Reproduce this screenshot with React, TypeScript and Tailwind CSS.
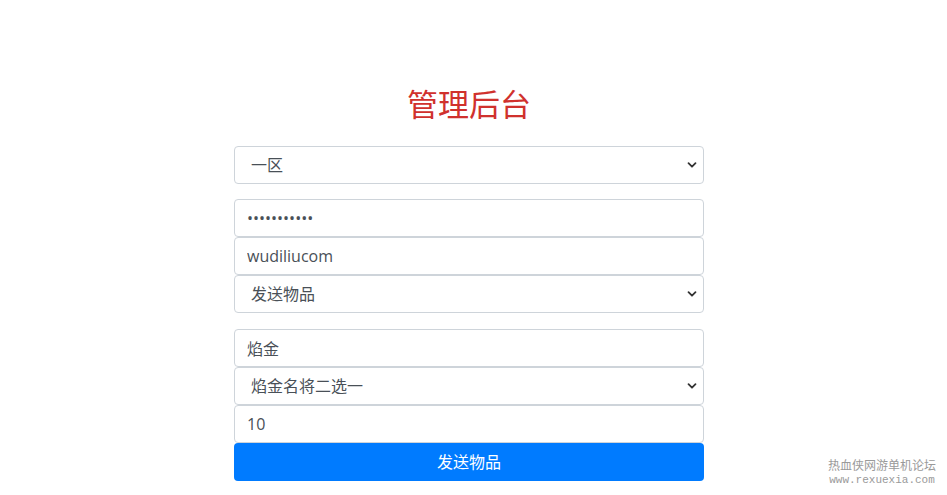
import React from 'react';

const fieldBase =
  'block w-full h-[38px] px-3 border border-[#ced4da] rounded-[4px] bg-white text-[16px] text-[#495057] outline-none';

const Chevron = () => (
  <svg
    className="pointer-events-none absolute right-[7px] top-1/2 -translate-y-1/2"
    width="10"
    height="8"
    viewBox="0 0 10 8"
    fill="none"
  >
    <path d="M1.5 2.2 5 5.7l3.5-3.5" stroke="#333" strokeWidth="1.8" strokeLinecap="round" strokeLinejoin="round" />
  </svg>
);

const Select = ({ options }: { options: string[] }) => (
  <div className="relative">
    <select className={`${fieldBase} appearance-none pl-4`} defaultValue={options[0]}>
      {options.map((o) => (
        <option key={o}>{o}</option>
      ))}
    </select>
    <Chevron />
  </div>
);

const App: React.FC = () => {
  return (
    <div
      className="relative min-h-[495px] bg-white"
      style={{ fontFamily: '"Open Sans", "Noto Sans CJK SC", sans-serif' }}
    >
      <div className="ml-[234px] w-[470px] pt-[85px]">
        <h2 className="text-center text-[31px] leading-[38px] text-[#d0312d] font-normal mb-[23px]">管理后台</h2>

        <div className="mb-[15px]">
          <Select options={['一区', '二区', '三区']} />
        </div>

        <input type="password" className={fieldBase} defaultValue="12345678901" />
        <input type="text" className={fieldBase} defaultValue="wudiliucom" />
        <div className="mb-[16px]">
          <Select options={['发送物品', '充值元宝']} />
        </div>

        <input type="text" className={fieldBase} defaultValue="焰金" />
        <Select options={['焰金名将二选一']} />
        <input type="text" className={fieldBase} defaultValue="10" />
        <button className="block w-full h-[38px] rounded-[4px] bg-[#007bff] text-white text-[16px]">发送物品</button>
      </div>

      <div className="absolute left-[826px] top-[459px] w-[112px] text-center text-[#9a9a9a]">
        <div className="text-[12px] leading-[14px]">热血侠网游单机论坛</div>
        <div className="text-[11px] leading-[14px]" style={{ fontFamily: '"Liberation Mono", monospace' }}>
          www.rexuexia.com
        </div>
      </div>
    </div>
  );
};

export default App;
